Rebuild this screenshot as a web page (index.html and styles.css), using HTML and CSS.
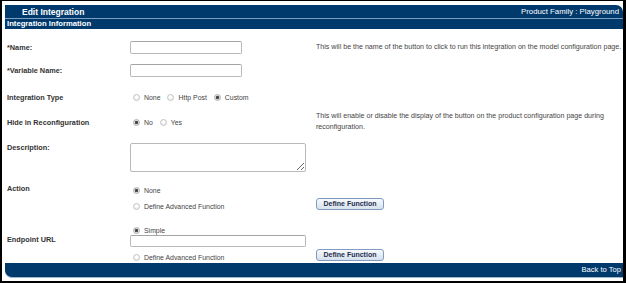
FILE: index.html
```html
<!DOCTYPE html>
<html lang="en">
<head>
    <meta charset="UTF-8">
    <title>Edit Integration</title>
    <link rel="stylesheet" href="styles.css">
</head>
<body>
    <div class="frame">
        <div class="page-head">
            <span class="page-title">Edit Integration</span>
            <span class="page-family">Product Family : Playground</span>
        </div>
        <div class="section-head">Integration Information</div>

        <div class="form">
            <div class="row row-name">
                <label class="field-label" for="intName">*Name:</label>
                <div class="field"><input type="text" id="intName" class="text-in short"></div>
                <div class="help nowrap">This will be the name of the button to click to run this integration on the model configuration page.</div>
            </div>

            <div class="row row-var">
                <label class="field-label" for="varName">*Variable Name:</label>
                <div class="field"><input type="text" id="varName" class="text-in short"></div>
                <div class="help"></div>
            </div>

            <div class="row row-type">
                <label class="field-label">Integration Type</label>
                <div class="field">
                    <label class="opt"><input type="radio" name="type" class="radio"> None</label>
                    <label class="opt"><input type="radio" name="type" class="radio"> Http Post</label>
                    <label class="opt"><input type="radio" name="type" class="radio" checked> Custom</label>
                </div>
                <div class="help"></div>
            </div>

            <div class="row row-hide">
                <label class="field-label">Hide in Reconfiguration</label>
                <div class="field">
                    <label class="opt"><input type="radio" name="hide" class="radio" checked> No</label>
                    <label class="opt"><input type="radio" name="hide" class="radio"> Yes</label>
                </div>
                <div class="help">This will enable or disable the display of the button on the product configuration page during reconfiguration.</div>
            </div>

            <div class="row row-desc">
                <label class="field-label" for="desc">Description:</label>
                <div class="field"><textarea id="desc" class="text-area"></textarea></div>
                <div class="help"></div>
            </div>

            <div class="row row-action">
                <label class="field-label">Action</label>
                <div class="field stack">
                    <label class="opt line"><input type="radio" name="action" class="radio" checked> None</label>
                    <label class="opt line"><input type="radio" name="action" class="radio"> Define Advanced Function</label>
                </div>
                <div class="help btn-col action-btn">
                    <button class="fn-btn">Define Function</button>
                </div>
            </div>

            <div class="row row-endpoint">
                <label class="field-label">Endpoint URL</label>
                <div class="field stack">
                    <label class="opt line-simple"><input type="radio" name="endpoint" class="radio" checked> Simple</label>
                    <input type="text" class="text-in long">
                    <label class="opt line-adv"><input type="radio" name="endpoint" class="radio"> Define Advanced Function</label>
                </div>
                <div class="help btn-col endpoint-btn">
                    <button class="fn-btn">Define Function</button>
                </div>
            </div>
        </div>

        <div class="page-foot">Back to Top</div>
    </div>
</body>
</html>
```

FILE: styles.css
```css
body {
    margin: 0;
    padding: 0;
    background: #fff;
    font-family: "Liberation Sans", Arial, sans-serif;
    color: #333;
}
.frame {
    width: 626px;
    height: 283px;
    box-sizing: border-box;
    border: 1px solid #000;
    border-left-width: 2px;
    border-right-width: 3px;
    border-bottom-width: 2px;
    padding: 4px 0 0 3px;
    overflow: hidden;
}
.page-head {
    height: 13px;
    background: #003a6d;
    border-top-right-radius: 7px;
    border-bottom: 1px solid #7d9fc2;
    display: flex;
    align-items: center;
    justify-content: space-between;
    padding: 0 4px 0 17px;
    color: #fff;
}
.page-title {
    font-weight: bold;
    font-size: 8.5px;
}
.page-family {
    font-size: 7.8px;
}
.section-head {
    height: 10px;
    line-height: 10px;
    background: #003a6d;
    color: #fff;
    font-weight: bold;
    font-size: 7.7px;
    padding-left: 2px;
}
.form {
    padding-top: 7px;
}
.row {
    display: flex;
    align-items: center;
    padding-left: 2px;
    font-size: 6.9px;
}
.field-label {
    width: 123px;
    flex: none;
    font-weight: bold;
    font-size: 7.3px;
    color: #333;
}
.field {
    width: 186px;
    flex: none;
    display: flex;
    align-items: center;
}
.help {
    flex: 1;
    color: #444;
    font-size: 7.1px;
    line-height: 11px;
}
.nowrap {
    white-space: nowrap;
}
.row-name, .row-var { height: 23px; }
.row-type { height: 30px; }
.row-hide { height: 20px; }
.row-desc {
    height: 45px;
    align-items: flex-start;
    padding-top: 11px;
    box-sizing: border-box;
}
.row-desc .field-label { line-height: 10px; }
.row-action {
    height: 37px;
    align-items: flex-start;
    padding-top: 5px;
    box-sizing: border-box;
}
.row-action .field-label { line-height: 14px; }
.row-endpoint {
    height: 49px;
    align-items: flex-start;
    padding-top: 10px;
    box-sizing: border-box;
}
.row-endpoint .field-label {
    line-height: 12px;
    margin-top: 10px;
}
.stack {
    flex-direction: column;
    align-items: flex-start;
}
.text-in {
    box-sizing: border-box;
    height: 13px;
    border: 1px solid #b9b9b9;
    border-top-color: #a5a5a5;
    border-radius: 2px;
    padding: 0;
    margin: 0;
    background: #fff;
}
.short { width: 112px; }
.long {
    width: 176px;
    height: 12px;
    margin-top: -1px;
}
.text-area {
    box-sizing: border-box;
    width: 176px;
    height: 29px;
    border: 1px solid #b9b9b9;
    border-radius: 2px;
    margin: 0;
    padding: 0;
}
.opt {
    display: flex;
    align-items: center;
    color: #444;
    margin-right: 4px;
    white-space: nowrap;
}
.opt.line { height: 16px; }
.line-simple { height: 12px; }
.line-adv { height: 14px; margin-top: 3px; }
.radio {
    appearance: none;
    -webkit-appearance: none;
    width: 7px;
    height: 7px;
    margin: 0 4px 0 3px;
    border: 1px solid #c4c4c4;
    border-radius: 50%;
    background: radial-gradient(circle at 50% 40%, #ffffff 20%, #e2e2e2 100%);
    box-sizing: border-box;
}
.radio:checked {
    background: radial-gradient(circle, #3a3a3a 0, #555 1.4px, #d8d8d8 1.9px, #f4f4f4 100%);
    border-color: #b0b0b0;
}
.btn-col {
    display: flex;
    align-items: flex-start;
}
.action-btn { padding-top: 16px; }
.endpoint-btn { padding-top: 25px; }
.fn-btn {
    width: 68px;
    height: 12px;
    padding: 0;
    border: 1px solid #7f9cc0;
    border-radius: 3px;
    background: linear-gradient(#f7f9fc, #d6e0ed);
    color: #1d2f4d;
    font-family: "Liberation Sans", Arial, sans-serif;
    font-weight: bold;
    font-size: 7px;
    line-height: 10px;
    cursor: pointer;
}
.page-foot {
    height: 14px;
    line-height: 14px;
    background: #003a6d;
    border-bottom-left-radius: 7px;
    border-bottom: 1px solid #9db6d0;
    color: #fff;
    font-size: 7.6px;
    text-align: right;
    padding-right: 2px;
}
```
